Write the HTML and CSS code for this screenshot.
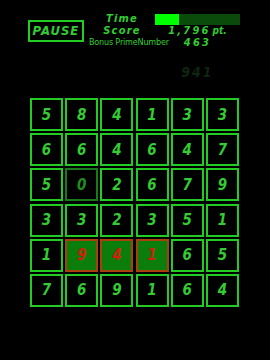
FILE: index.html
```html
<!DOCTYPE html>
<html lang="en">
<head>
    <meta charset="UTF-8">
    <title>Prime Panel</title>
    <link rel="stylesheet" href="styles.css">
</head>
<body>
    <div class="hud">
        <div class="pause">PAUSE</div>
        <div class="labels">
            <div class="lbl">Time</div>
            <div class="lbl">Score</div>
            <div class="lbl small">Bonus PrimeNumber</div>
        </div>
        <div class="values">
            <div class="bar"><div class="fill" style="width: 24px"></div></div>
            <div class="val">1,796<span class="unit">pt.</span></div>
            <div class="val">463</div>
            <div class="ghost">941</div>
        </div>
    </div>
    <div class="board">
        <div class="cell">5</div><div class="cell">8</div><div class="cell">4</div><div class="cell">1</div><div class="cell">3</div><div class="cell">3</div>
        <div class="cell">6</div><div class="cell">6</div><div class="cell">4</div><div class="cell">6</div><div class="cell">4</div><div class="cell">7</div>
        <div class="cell">5</div><div class="cell dim">0</div><div class="cell">2</div><div class="cell">6</div><div class="cell">7</div><div class="cell">9</div>
        <div class="cell">3</div><div class="cell">3</div><div class="cell">2</div><div class="cell">3</div><div class="cell">5</div><div class="cell">1</div>
        <div class="cell">1</div><div class="cell sel">9</div><div class="cell sel">4</div><div class="cell sel">1</div><div class="cell">6</div><div class="cell">5</div>
        <div class="cell">7</div><div class="cell">6</div><div class="cell">9</div><div class="cell">1</div><div class="cell">6</div><div class="cell">4</div>
    </div>
</body>
</html>
```
FILE: styles.css
```css
body {
    margin: 0;
    background: #000;
    width: 270px;
    height: 360px;
    overflow: hidden;
    font-family: "DejaVu Sans", "Liberation Sans", sans-serif;
    font-stretch: condensed;
    font-style: italic;
    font-weight: bold;
    color: #3c3;
}
.hud {
    display: flex;
    padding: 13px 0 0 28px;
}
.pause {
    box-sizing: border-box;
    width: 56px;
    height: 22px;
    margin-top: 7px;
    border: 2px solid #2c2;
    text-align: center;
    font-size: 13px;
    line-height: 18px;
    letter-spacing: 1px;
}
.labels {
    width: 66px;
    margin-left: 5px;
    text-align: center;
}
.lbl {
    height: 12px;
    font-size: 11px;
    line-height: 12px;
    letter-spacing: 1.2px;
}
.lbl.small {
    font-family: "Liberation Sans Narrow", "DejaVu Sans", sans-serif;
    font-style: normal;
    font-weight: normal;
    font-size: 9px;
    line-height: 11px;
    letter-spacing: -0.2px;
    white-space: nowrap;
}
.values {
    width: 85px;
    text-align: center;
}
.bar {
    height: 11px;
    margin-top: 1px;
    background: #0a4a0a;
}
.fill {
    height: 100%;
    background: #0f0;
}
.val {
    height: 12px;
    font-size: 11px;
    line-height: 12px;
    letter-spacing: 2.2px;
}
.unit {
    font-size: 10px;
    letter-spacing: 0;
    margin-left: 2px;
}
.ghost {
    margin-top: 17px;
    font-size: 14px;
    line-height: 13px;
    letter-spacing: 2px;
    color: #0e260e;
}
.board {
    display: grid;
    grid-template-columns: repeat(6, 33px);
    grid-auto-rows: 33px;
    gap: 2.2px;
    margin: 19px 0 0 30px;
}
.cell {
    box-sizing: border-box;
    border: 2px solid #2c2;
    display: flex;
    align-items: center;
    justify-content: center;
    font-size: 15px;
}
.cell.dim {
    border-color: #197a19;
    color: #1f8f1f;
}
.cell.sel {
    background: #0a7d0a;
    border-color: #a8420c;
    color: #d0200c;
}
```
